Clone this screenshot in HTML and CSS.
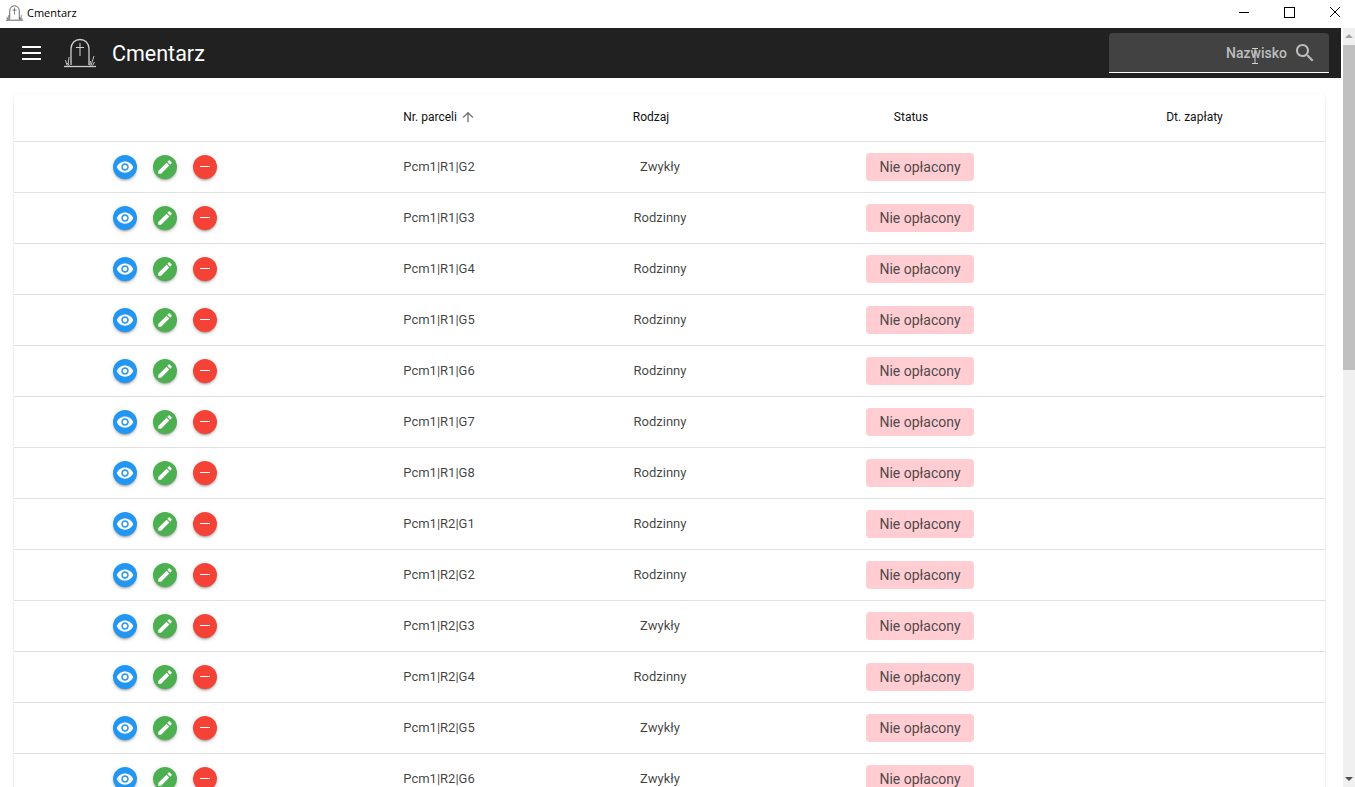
FILE: index.html
```html
<!DOCTYPE html>
<html lang="pl">
<head>
    <meta charset="UTF-8">
    <meta name="viewport" content="width=device-width, initial-scale=1.0">
    <title>Cmentarz</title>
    <link rel="stylesheet" href="styles.css">
</head>
<body>
    <svg class="icon-defs" width="0" height="0">
        <defs>
            <symbol id="grave" viewBox="0 0 32 30">
                <path d="M7 27V11C7 5 11 1.500 16 1.500S25 5 25 11V27" fill="none" stroke="currentColor" stroke-width="1.300"/>
                <path d="M16 5V18M12 9.500H20" fill="none" stroke="currentColor"/>
                <path d="M0 28.500H32" fill="none" stroke="currentColor" stroke-width="1.300"/>
                <path d="M3 27.500L1.500 22M4 27.500L5 19M5.500 27.500L3 25M27 27.500L30 18M28.500 27.500L30.500 24M26 27.500L26.500 23" fill="none" stroke="currentColor" stroke-width=".9"/>
            </symbol>
            <symbol id="eye" viewBox="0 0 24 24">
                <path fill="currentColor" d="M12 4.500C7 4.500 2.730 7.610 1 12c1.730 4.390 6 7.500 11 7.500s9.270-3.110 11-7.500c-1.730-4.390-6-7.500-11-7.500zM12 17c-2.760 0-5-2.240-5-5s2.240-5 5-5 5 2.240 5 5-2.240 5-5 5zm0-8c-1.660 0-3 1.340-3 3s1.340 3 3 3 3-1.340 3-3-1.340-3-3-3z"/>
            </symbol>
            <symbol id="pencil" viewBox="0 0 24 24">
                <path fill="currentColor" d="M3 17.250V21h3.750L17.810 9.940l-3.750-3.750L3 17.250zM20.710 7.040c.39-.39.39-1.020 0-1.410l-2.340-2.340c-.39-.39-1.020-.39-1.410 0l-1.830 1.830 3.750 3.750 1.830-1.830z"/>
            </symbol>
        </defs>
    </svg>

    <div class="titlebar">
        <svg class="titlebar-logo"><use href="#grave"/></svg>
        <span class="titlebar-name">Cmentarz</span>
        <div class="window-buttons">
            <svg class="window-button" viewBox="0 0 46 28"><path d="M22 12.500H32" stroke="#000"/></svg>
            <svg class="window-button" viewBox="0 0 46 28"><rect x="21.500" y="7.500" width="10" height="10" fill="none" stroke="#000"/></svg>
            <svg class="window-button" viewBox="0 0 46 28"><path d="M21 7L31 17M31 7L21 17" stroke="#000"/></svg>
        </div>
    </div>

    <div class="window-body">
        <div class="app">
            <header class="toolbar">
                <svg class="menu-icon" viewBox="0 0 19 14"><path d="M0 1H19M0 7H19M0 13H19" stroke="#fff" stroke-width="2"/></svg>
                <svg class="toolbar-logo"><use href="#grave"/></svg>
                <span class="toolbar-title">Cmentarz</span>
                <div class="search-field">
                    <span class="search-label">Nazwisko</span>
                    <svg class="search-icon" viewBox="0 0 24 24"><path fill="currentColor" d="M15.500 14h-.79l-.28-.27C15.410 12.590 16 11.110 16 9.500 16 5.910 13.090 3 9.500 3S3 5.910 3 9.500 5.910 16 9.500 16c1.610 0 3.090-.59 4.230-1.570l.27.28v.79l5 4.990L20.490 19l-4.990-5zm-6 0C7.010 14 5 11.990 5 9.500S7.010 5 9.500 5 14 7.010 14 9.500 11.990 14 9.500 14z"/></svg>
                    <svg class="text-cursor" viewBox="0 0 8 16"><path d="M1 .5H7M1 15.500H7M4 .5V15.500" stroke="#d0d0d0" fill="none"/></svg>
                </div>
            </header>

            <main class="content">
                <div class="card">
                    <table class="graves">
                        <colgroup>
                            <col class="col-actions">
                            <col class="col-parcel">
                            <col class="col-kind">
                            <col class="col-status">
                            <col class="col-paid">
                        </colgroup>
                        <thead>
                            <tr>
                                <th></th>
                                <th><span class="sort-header">Nr. parceli<svg class="sort-arrow" viewBox="0 0 24 24"><path fill="currentColor" d="M4 12l1.410 1.410L11 7.830V20h2V7.830l5.580 5.590L20 12l-8-8-8 8z"/></svg></span></th>
                                <th><span class="sort-header">Rodzaj<span class="sort-space"></span></span></th>
                                <th><span class="sort-header">Status<span class="sort-space"></span></span></th>
                                <th><span class="sort-header">Dt. zapłaty<span class="sort-space"></span></span></th>
                            </tr>
                        </thead>
                        <tbody id="rows"></tbody>
                    </table>
                </div>
            </main>
        </div>

        <div class="scrollbar">
            <div class="scroll-arrow scroll-arrow-up"></div>
            <div class="scroll-track"><div class="scroll-thumb"></div></div>
            <div class="scroll-arrow scroll-arrow-down"></div>
        </div>
    </div>

    <script>
        const rows = [
            ['Pcm1|R1|G2', 'Zwykły'],
            ['Pcm1|R1|G3', 'Rodzinny'],
            ['Pcm1|R1|G4', 'Rodzinny'],
            ['Pcm1|R1|G5', 'Rodzinny'],
            ['Pcm1|R1|G6', 'Rodzinny'],
            ['Pcm1|R1|G7', 'Rodzinny'],
            ['Pcm1|R1|G8', 'Rodzinny'],
            ['Pcm1|R2|G1', 'Rodzinny'],
            ['Pcm1|R2|G2', 'Rodzinny'],
            ['Pcm1|R2|G3', 'Zwykły'],
            ['Pcm1|R2|G4', 'Rodzinny'],
            ['Pcm1|R2|G5', 'Zwykły'],
            ['Pcm1|R2|G6', 'Zwykły']
        ];

        const tbody = document.getElementById('rows');

        rows.forEach(row => {
            const tr = document.createElement('tr');
            tr.innerHTML = `
                <td>
                    <div class="actions">
                        <button class="round-button blue"><svg><use href="#eye"/></svg></button>
                        <button class="round-button green"><svg><use href="#pencil"/></svg></button>
                        <button class="round-button red"><span class="minus"></span></button>
                    </div>
                </td>
                <td>${row[0]}</td>
                <td>${row[1]}</td>
                <td><span class="badge">Nie opłacony</span></td>
                <td></td>`;
            tbody.appendChild(tr);
        });
    </script>
</body>
</html>
```

FILE: styles.css
```css
* {
    box-sizing: border-box;
}

html,
body {
    height: 100%;
    margin: 0;
    overflow: hidden;
}

body {
    display: flex;
    flex-direction: column;
    background: #fff;
    font-family: Roboto, "Liberation Sans", sans-serif;
}

.icon-defs {
    position: absolute;
}

.titlebar {
    display: flex;
    align-items: center;
    flex: 0 0 28px;
    padding-left: 6px;
    background: #fff;
    font-family: "Open Sans", "Liberation Sans", sans-serif;
    font-size: 11px;
    color: #000;
}

.titlebar-logo {
    width: 17px;
    height: 16px;
    margin: 0 4px 3px 0;
    color: #222;
}

.titlebar-name {
    margin-bottom: 3px;
}

.window-buttons {
    display: flex;
    margin-left: auto;
}

.window-button {
    width: 46px;
    height: 28px;
}

.window-body {
    display: flex;
    flex: 1;
    min-height: 0;
}

.app {
    display: flex;
    flex-direction: column;
    flex: 1;
    min-width: 0;
}

.toolbar {
    display: flex;
    align-items: center;
    flex: 0 0 50px;
    padding: 0 12px 0 22px;
    background: #212121;
    color: #fff;
}

.menu-icon {
    width: 19px;
    height: 14px;
}

.toolbar-logo {
    width: 32px;
    height: 30px;
    margin-left: 23px;
    color: #d0d0d0;
}

.toolbar-title {
    margin-left: 16px;
    font-size: 21.500px;
    font-weight: 400;
}

.search-field {
    position: relative;
    display: flex;
    align-items: center;
    justify-content: flex-end;
    width: 220px;
    height: 40px;
    margin-left: auto;
    padding-right: 12px;
    border-bottom: 1px solid #fff;
    border-radius: 4px 4px 0 0;
    background: #424242;
    color: #bdbdbd;
}

.search-label {
    font-size: 14px;
    font-weight: 500;
}

.search-icon {
    width: 24px;
    height: 24px;
    margin-left: 6px;
}

.text-cursor {
    position: absolute;
    top: 15px;
    left: 142px;
    width: 8px;
    height: 16px;
}

.content {
    flex: 1;
    min-height: 0;
    overflow: hidden;
    padding: 16px 16px 0 14px;
}

.card {
    border-radius: 4px;
    background: #fff;
    box-shadow: 0 2px 1px -1px rgba(0, 0, 0, .2), 0 1px 1px 0 rgba(0, 0, 0, .14), 0 1px 3px 0 rgba(0, 0, 0, .12);
}

.graves {
    width: 100%;
    border-collapse: collapse;
    table-layout: fixed;
}

.col-actions {
    width: 302px;
}

.col-parcel {
    width: 246px;
}

.col-kind {
    width: 196px;
}

.col-status {
    width: 324px;
}

.graves th {
    height: 47px;
    padding: 0;
    border-bottom: 1px solid #e0e0e0;
    font-size: 12px;
    font-weight: 400;
    color: #111;
}

.graves td {
    height: 51px;
    padding: 0;
    border-bottom: 1px solid #e0e0e0;
    font-size: 13px;
    text-align: center;
    color: rgba(0, 0, 0, .75);
}

.sort-header {
    display: inline-flex;
    align-items: center;
}

.sort-arrow {
    width: 16px;
    height: 16px;
    margin: 0 -1px 0 3px;
    color: #757575;
}

.sort-space {
    width: 18px;
}

.actions {
    display: flex;
    justify-content: center;
    gap: 16px;
}

.round-button {
    display: flex;
    align-items: center;
    justify-content: center;
    width: 24px;
    height: 24px;
    padding: 0;
    border: none;
    border-radius: 50%;
    color: #fff;
    box-shadow: 0 3px 1px -2px rgba(0, 0, 0, .2), 0 2px 2px 0 rgba(0, 0, 0, .14), 0 1px 5px 0 rgba(0, 0, 0, .12);
}

.round-button svg {
    width: 18px;
    height: 18px;
}

.blue {
    background: #2196f3;
}

.green {
    background: #4caf50;
}

.red {
    background: #f44336;
}

.minus {
    width: 10px;
    height: 1.500px;
    background: #fff;
}

.badge {
    display: inline-block;
    padding: 0 13px;
    border-radius: 4px;
    background: #ffcdd2;
    font-size: 14px;
    line-height: 28px;
    color: #504a4a;
}

.scrollbar {
    display: flex;
    flex-direction: column;
    flex: 0 0 12px;
    margin-left: 2px;
    background: #f0f0f0;
}

.scroll-arrow {
    flex: 0 0 17px;
    position: relative;
}

.scroll-arrow::after {
    content: "";
    position: absolute;
    left: 2px;
    border-left: 4px solid transparent;
    border-right: 4px solid transparent;
}

.scroll-arrow-up::after {
    top: 6px;
    border-bottom: 4px solid #a3a3a3;
}

.scroll-arrow-down::after {
    bottom: 6px;
    border-top: 4px solid #505050;
}

.scroll-track {
    flex: 1;
}

.scroll-thumb {
    height: 325px;
    background: #c0c0c0;
}
```
